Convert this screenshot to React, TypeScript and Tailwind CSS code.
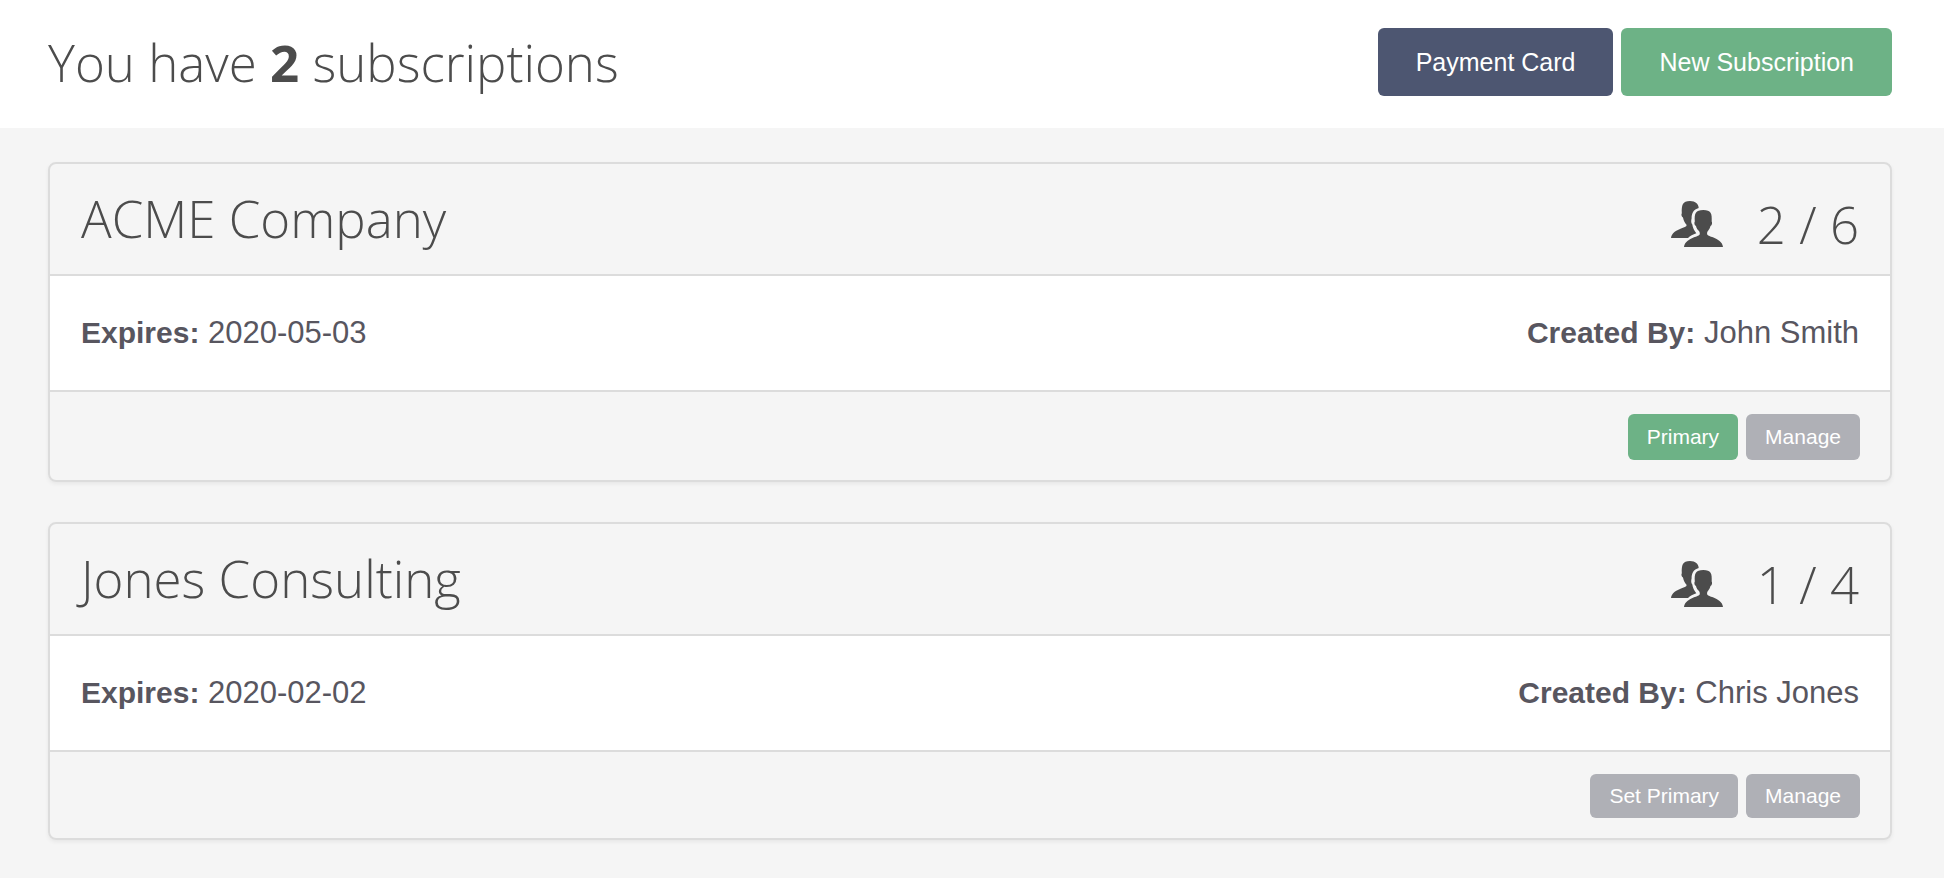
import type { ReactNode } from "react";

type Subscription = {
  name: string;
  used: number;
  seats: number;
  expires: string;
  createdBy: string;
  primary: boolean;
};

const subscriptions: Subscription[] = [
  { name: "ACME Company", used: 2, seats: 6, expires: "2020-05-03", createdBy: "John Smith", primary: true },
  { name: "Jones Consulting", used: 1, seats: 4, expires: "2020-02-02", createdBy: "Chris Jones", primary: false },
];

function UsersIcon() {
  return (
    <svg viewBox="0 0 52 46" className="h-[46px] w-[52px] fill-[#4c4c4c]" aria-hidden="true">
      <path d="M0 37C.5 32 5.500 29.500 9.500 27.800C13 26.300 15.500 25.800 15.700 24C14 22 12.500 19.500 12 16.500C10.500 16 10 13.500 10.800 12.300C10.500 4 11.500 0 19 0C24.500 0 27.500 3 27.700 7C22.500 8.500 20.600 12 20.600 17.500C20 19.500 20 22 21.300 23.500C21.800 27 23.300 29.800 25.300 32.200C22 33.600 19 34.800 17 37Z" />
      <path d="M13 46C13.500 41 18.500 38.300 22.500 36.600C26 35.200 28.700 34.600 28.800 33C28.900 31.500 28.500 30.500 27.500 29.500C26 28 25.300 26.500 25 25C23.300 24.500 23 21.500 23.800 20.500C23.300 12.500 24.500 9 32.300 9C40 9 41.200 12.500 40.700 20.500C41.500 21.500 41 24.500 39.500 25C39.200 26.500 38.500 28 37.300 29.500C36.400 30.500 36 31.500 36.100 33C36.200 34.600 39 35.200 42.500 36.600C46.500 38.300 51.500 41 52 46Z" />
    </svg>
  );
}

function SmallButton({ green = false, children }: { green?: boolean; children: ReactNode }) {
  return (
    <button
      type="button"
      className={`rounded-md px-[19px] text-[21px] leading-6 text-white ${green ? "bg-[#6db286] py-[11px]" : "bg-[#afb0b6] py-2.5"}`}
    >
      {children}
    </button>
  );
}

function SubscriptionCard({ item }: { item: Subscription }) {
  return (
    <section className="overflow-hidden rounded-lg border-2 border-[#dcdcdc] shadow-[0_2px_4px_rgba(0,0,0,0.06)]">
      <header className="flex items-start justify-between border-b-2 border-[#dcdcdc] px-[31px] py-5 font-['Open_Sans',sans-serif] text-[51px] font-light text-[#4c4c4c]">
        <h2 className="leading-[68px]">{item.name}</h2>
        <div className="flex items-center gap-[34px] pt-2.5 leading-[60px]">
          <UsersIcon />
          <span>
            {item.used} / {item.seats}
          </span>
        </div>
      </header>
      <div className="flex items-center justify-between border-b-2 border-[#dcdcdc] bg-white px-[31px] py-9 text-[31px] leading-[42px] text-[#58565f]">
        <p>
          <strong className="text-[30px]">Expires:</strong> {item.expires}
        </p>
        <p>
          <strong className="text-[30px]">Created By:</strong> {item.createdBy}
        </p>
      </div>
      <footer className="flex items-stretch justify-end gap-2 px-[30px] pt-[22px] pb-5">
        <SmallButton green={item.primary}>{item.primary ? "Primary" : "Set Primary"}</SmallButton>
        <SmallButton>Manage</SmallButton>
      </footer>
    </section>
  );
}

export default function App() {
  return (
    <div className="min-h-screen bg-[#f5f5f5] font-['Liberation_Sans',Arial,sans-serif]">
      <header className="flex items-start justify-between bg-white pt-7 pr-[52px] pb-8 pl-12">
        <h1 className="font-['Open_Sans',sans-serif] text-[51px] leading-[68px] font-light text-[#4c4c4c]">
          You have <strong className="font-bold">2</strong> subscriptions
        </h1>
        <div className="flex gap-2 text-[25px] leading-7 text-white">
          <button type="button" className="rounded-md bg-[#4d5671] px-[38px] py-5">
            Payment Card
          </button>
          <button type="button" className="rounded-md bg-[#6db286] px-[38px] py-5">
            New Subscription
          </button>
        </div>
      </header>
      <main className="flex flex-col gap-10 pt-[34px] pr-[52px] pb-[38px] pl-12">
        {subscriptions.map((item) => (
          <SubscriptionCard key={item.name} item={item} />
        ))}
      </main>
    </div>
  );
}
